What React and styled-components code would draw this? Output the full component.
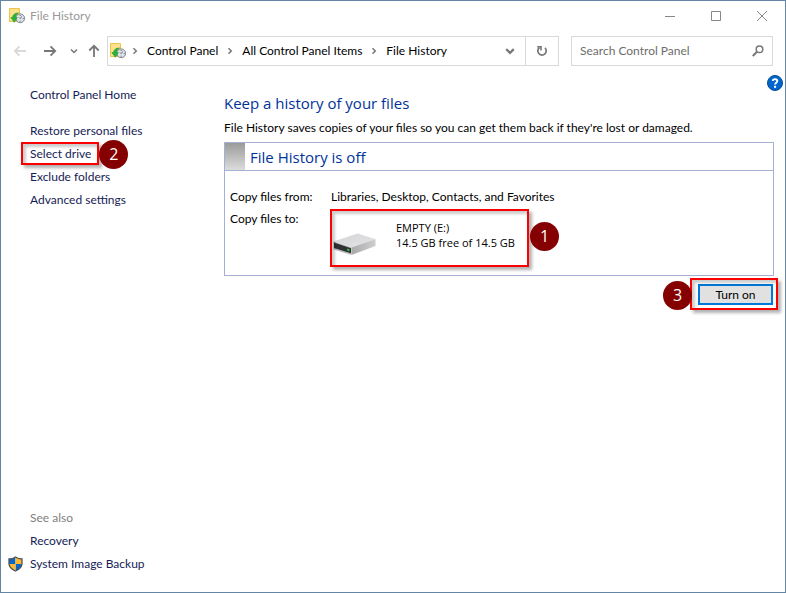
import React from "react";
import styled, { createGlobalStyle, css } from "styled-components";

const GlobalStyle = createGlobalStyle`
  *, *::before, *::after { box-sizing: border-box; }
  body { margin: 0; background: #fff; }
  body, button, input { font: 12px/16px Lato, "Open Sans", sans-serif; }
  h1, h2, p, ul, dl, dd { margin: 0; padding: 0; }
  ul { list-style: none; }
  svg { display: block; flex: none; }
`;

const Window = styled.div`
  display: flex;
  flex-direction: column;
  min-height: 100vh;
  border: 1px solid #6585a5;
  background: #fff;
  color: #000;
`;

const TitleBar = styled.header`
  display: flex;
  align-items: center;
  height: 30px;
  padding-left: 8px;
  gap: 5px;
  color: #999;
`;

const Title = styled.span`
  flex: 1;
`;

const CaptionButtons = styled.div`
  display: flex;
`;

const CaptionButton = styled.button`
  display: flex;
  align-items: center;
  justify-content: center;
  width: 46px;
  height: 30px;
  padding: 0;
  border: 0;
  background: none;
  color: #888;
`;

const Toolbar = styled.div`
  display: flex;
  align-items: center;
  padding: 5px 12px 0;
`;

const IconButton = styled.button`
  display: flex;
  align-items: center;
  justify-content: center;
  width: ${(p) => p.$width}px;
  height: 28px;
  padding: 0;
  border: 0;
  background: none;
  color: ${(p) => p.$tone || "#777"};
`;

const HistoryButtons = styled.div`
  display: grid;
  grid-template-columns: 30px 27px 17px 20px;
  flex: none;
`;

const AddressBar = styled.nav`
  display: flex;
  align-items: center;
  flex: 1;
  min-width: 0;
  height: 30px;
  padding-left: 2px;
  border: 1px solid #d9d9d9;
`;

const Crumbs = styled.ul`
  display: flex;
  align-items: center;
  flex: 1;
  gap: 3px;
  white-space: nowrap;
`;

const Crumb = styled.li`
  display: flex;
  align-items: center;

  svg { margin: 0 8px 0 5px; }
`;

const CrumbLink = styled.a`
  color: #000;
  text-decoration: none;
`;

const RefreshCell = styled.div`
  border-left: 1px solid #d9d9d9;
`;

const SearchBox = styled.label`
  display: flex;
  align-items: center;
  width: 202px;
  height: 30px;
  margin-left: 12px;
  padding: 0 8px;
  border: 1px solid #d9d9d9;
  color: #777;
`;

const SearchInput = styled.input`
  flex: 1;
  min-width: 0;
  padding: 0;
  border: 0;
  outline: 0;
  background: none;

  &::placeholder { color: #6d6d6d; opacity: 1; }
`;

const Body = styled.div`
  display: grid;
  grid-template-columns: 223px 1fr;
  flex: 1;
`;

const Sidebar = styled.aside`
  display: flex;
  flex-direction: column;
  justify-content: space-between;
  padding: 17px 0 17px 29px;
`;

const LinkList = styled.ul`
  display: flex;
  flex-direction: column;
  align-items: flex-start;
`;

const LinkRow = styled.li`
  display: flex;
  align-items: center;
  height: 23px;
  margin-bottom: ${(p) => (p.$spaced ? 13 : 0)}px;
  color: #808080;
`;

const TaskLink = styled.a`
  color: #151c55;
  text-decoration: none;
  white-space: nowrap;
`;

const ShieldSlot = styled.span`
  margin: 0 7px 0 -22px;
`;

const Main = styled.main`
  display: flex;
  flex-direction: column;
  padding: 9px 11px 0 0;
`;

const HelpButton = styled.button`
  align-self: flex-end;
  width: 16px;
  height: 16px;
  margin-right: -9px;
  padding: 0;
  border: 0;
  background: none;
`;

const Heading = styled.h1`
  color: #003399;
  font: 400 15px/24px "Open Sans", sans-serif;
`;

const Intro = styled.p`
  margin: 5px 0 6px;
`;

const Panel = styled.section`
  border: 1px solid #a6b0d4;
`;

const PanelHeader = styled.div`
  display: flex;
  align-items: stretch;
  height: 28px;
  gap: 5px;
  border-bottom: 1px solid #a6b0d4;
`;

const StatusSwatch = styled.span`
  width: 20px;
  background: linear-gradient(#9b9b9b, #dcdcdc);
`;

const PanelTitle = styled.h2`
  color: #003399;
  font: 400 15px/28px "Open Sans", sans-serif;
`;

const Details = styled.dl`
  display: grid;
  grid-template-columns: 101px 1fr;
  row-gap: 6px;
  padding: 18px 5px 14px;
`;

const callout = css`
  position: relative;

  &::after {
    content: "";
    position: absolute;
    inset: ${(p) => p.$inset};
    border: 2px solid #fa0000;
    box-shadow: 3px 3px 3px rgba(0, 0, 0, 0.3), inset 3px 3px 3px rgba(0, 0, 0, 0.2);
    pointer-events: none;
  }
`;

const Callout = styled.div`
  ${callout}
  width: fit-content;
`;

const StepBadge = styled.span`
  position: absolute;
  top: 50%;
  ${(p) => (p.$side === "left" ? "right" : "left")}: calc(100% + ${(p) => p.$gap}px);
  z-index: 1;
  width: 29px;
  height: 29px;
  margin-top: -14px;
  border-radius: 50%;
  background: #850000;
  color: #fff;
  font: 16px/29px "Open Sans", sans-serif;
  text-align: center;
`;

const Drive = styled.div`
  display: flex;
  align-items: flex-start;
  width: 198px;
  height: 50px;
  gap: 20px;
  padding: 9px 0 0 2px;
  font: 11px/15px "Open Sans", sans-serif;
  white-space: nowrap;
`;

const DriveArt = styled.span`
  padding-top: 13px;
`;

const Actions = styled.div`
  display: flex;
  justify-content: flex-end;
  padding: 8px 1px 0 0;
`;

const PrimaryButton = styled.button`
  display: block;
  width: 75px;
  height: 21px;
  padding: 0;
  border: 2px solid #0078d7;
  background: #e1e1e1;
  color: #000;
`;

function HistoryIcon() {
  return (
    <svg width="16" height="16" viewBox="0 0 16 16" aria-hidden="true">
      <path d="M.5.5h10v13H.5z" fill="#fce08c" stroke="#eac44c" />
      <circle cx="11.200" cy="10.300" r="4.400" fill="#dde3e8" stroke="#7d858c" />
      <path d="m10.800 10.700 2.200-2.200M11.200 7v1M11.200 12.800v1M13.700 10.500h1M10 9.500l1 1" fill="none" stroke="#59636b" strokeWidth=".9" />
      <path d="M9.500 5C6 4.800 3.700 6.800 3.500 9.500H1.800l3.500 4.800 3-4.800H6.500C6.600 7.500 7.500 6.200 9.500 5z" fill="#25b53a" stroke="#178c2b" strokeWidth=".5" />
    </svg>
  );
}

function Arrow({ direction }) {
  const turn = { left: 180, right: 0, up: -90 }[direction];
  return (
    <svg width="14" height="14" viewBox="0 0 14 14" aria-hidden="true">
      <path d="M1 7h11M7.500 2.300 12.200 7l-4.700 4.700" transform={`rotate(${turn} 7 7)`} fill="none" stroke="currentColor" strokeWidth="1.800" />
    </svg>
  );
}

function Chevron({ down, size = 8, weight = 1.5 }) {
  return (
    <svg width={size} height={size} viewBox="0 0 8 8" aria-hidden="true">
      <path d={down ? "M1 2.500 4 5.500 7 2.500" : "M2.500 1.200 5.300 4 2.500 6.800"} fill="none" stroke="#777" strokeWidth={weight} />
    </svg>
  );
}

function CaptionIcon({ d }) {
  return (
    <svg width="10" height="10" viewBox="0 0 10 10" aria-hidden="true">
      <path d={d} fill="none" stroke="currentColor" />
    </svg>
  );
}

function RefreshIcon() {
  return (
    <svg width="12" height="12" viewBox="0 0 12 12" aria-hidden="true">
      <path d="M9 2.900A4.200 4.200 0 1 1 3.500 2.500" fill="none" stroke="currentColor" strokeWidth="1.700" />
      <path d="M1.200 1.700H5v3.800" fill="none" stroke="currentColor" strokeWidth="1.600" />
    </svg>
  );
}

function SearchIcon() {
  return (
    <svg width="12" height="12" viewBox="0 0 12 12" aria-hidden="true">
      <circle cx="7.500" cy="4.300" r="3.300" fill="none" stroke="currentColor" strokeWidth="1.500" />
      <path d="M5 6.800.8 11" stroke="currentColor" strokeWidth="2" />
    </svg>
  );
}

function HelpIcon() {
  return (
    <svg width="16" height="16" viewBox="0 0 16 16" aria-hidden="true">
      <circle cx="8" cy="8" r="7.500" fill="#0066cc" stroke="#084a94" />
      <path d="M5.800 6C5.800 3.600 10.300 3.500 10.300 6c0 1.700-2.200 1.800-2.200 3.600" fill="none" stroke="#fff" strokeWidth="1.900" />
      <path d="M7 10.800h2.100v2H7z" fill="#fff" />
    </svg>
  );
}

const shieldOutline = "M7.500 1C5.500 2.500 3.500 3 1 3v4.500c0 3.500 3 6 6.500 7.500 3.500-1.500 6.500-4 6.500-7.500V3c-2.500 0-4.500-.5-6.500-2z";

function ShieldIcon() {
  return (
    <svg width="15" height="16" viewBox="0 0 15 16" aria-hidden="true">
      <clipPath id="shield">
        <path d={shieldOutline} />
      </clipPath>
      <g clipPath="url(#shield)">
        <path d="M0 0h7.500v8H0zM7.500 8H15v8H7.500z" fill="#0867c7" />
        <path d="M7.500 0H15v8H7.500zM0 8h7.500v8H0z" fill="#fdb82e" />
      </g>
      <path d={shieldOutline} fill="none" stroke="#4d5359" strokeWidth="1.300" />
    </svg>
  );
}

function DriveIcon() {
  return (
    <svg width="43" height="23" viewBox="0 0 43 23" aria-hidden="true">
      <defs>
        <linearGradient id="driveTop" x2="1" y2="1">
          <stop stopColor="#d3d3d5" />
          <stop offset="1" stopColor="#e5e5e7" />
        </linearGradient>
        <linearGradient id="driveSide" x2="1">
          <stop stopColor="#a9a9ab" />
          <stop offset="1" stopColor="#cecece" />
        </linearGradient>
      </defs>
      <path d="m.5 8.500 24-8 18 5.500-24 8.500z" fill="url(#driveTop)" />
      <path d="m18.500 14.500 24-8.500v7L18.500 22z" fill="url(#driveSide)" />
      <path d="m.5 8.500 18 6V22l-18-5.500z" fill="#b8b8ba" />
      <path d="m1 9.500 17 5.800v4.900L1 15z" fill="#303033" />
      <path d="m14.300 15.500 2 .7v2l-2-.6z" fill="#25e03a" />
    </svg>
  );
}

const crumbs = ["Control Panel", "All Control Panel Items", "File History"];

export default function App() {
  return (
    <>
      <GlobalStyle />
      <Window>
        <TitleBar>
          <HistoryIcon />
          <Title>File History</Title>
          <CaptionButtons>
            <CaptionButton aria-label="Minimize"><CaptionIcon d="M0 5.500h10" /></CaptionButton>
            <CaptionButton aria-label="Maximize"><CaptionIcon d="M.5.5h9v9h-9z" /></CaptionButton>
            <CaptionButton aria-label="Close"><CaptionIcon d="m0 0 10 10M10 0 0 10" /></CaptionButton>
          </CaptionButtons>
        </TitleBar>

        <Toolbar>
          <HistoryButtons>
            <IconButton $width={14} $tone="#d9d9d9" aria-label="Back"><Arrow direction="left" /></IconButton>
            <IconButton $width={14} aria-label="Forward"><Arrow direction="right" /></IconButton>
            <IconButton $width={8} aria-label="Recent locations"><Chevron down /></IconButton>
            <IconButton $width={14} aria-label="Up"><Arrow direction="up" /></IconButton>
          </HistoryButtons>
          <AddressBar aria-label="Address">
            <HistoryIcon />
            <Crumbs>
              {crumbs.map((name) => (
                <Crumb key={name}>
                  <Chevron />
                  <CrumbLink href="#">{name}</CrumbLink>
                </Crumb>
              ))}
            </Crumbs>
            <IconButton $width={30} aria-label="Previous locations"><Chevron down size={10} weight={1.7} /></IconButton>
            <RefreshCell>
              <IconButton $width={32} aria-label="Refresh"><RefreshIcon /></IconButton>
            </RefreshCell>
          </AddressBar>
          <SearchBox>
            <SearchInput type="text" placeholder="Search Control Panel" aria-label="Search Control Panel" />
            <SearchIcon />
          </SearchBox>
        </Toolbar>

        <Body>
          <Sidebar>
            <LinkList>
              <LinkRow $spaced><TaskLink href="#">Control Panel Home</TaskLink></LinkRow>
              <LinkRow><TaskLink href="#">Restore personal files</TaskLink></LinkRow>
              <LinkRow>
                <Callout $inset="-4px -8px -3px -9px">
                  <TaskLink href="#">Select drive</TaskLink>
                  <StepBadge $gap={8}>2</StepBadge>
                </Callout>
              </LinkRow>
              <LinkRow><TaskLink href="#">Exclude folders</TaskLink></LinkRow>
              <LinkRow><TaskLink href="#">Advanced settings</TaskLink></LinkRow>
            </LinkList>
            <LinkList>
              <LinkRow>See also</LinkRow>
              <LinkRow><TaskLink href="#">Recovery</TaskLink></LinkRow>
              <LinkRow>
                <ShieldSlot><ShieldIcon /></ShieldSlot>
                <TaskLink href="#">System Image Backup</TaskLink>
              </LinkRow>
            </LinkList>
          </Sidebar>

          <Main>
            <HelpButton aria-label="Help"><HelpIcon /></HelpButton>
            <Heading>Keep a history of your files</Heading>
            <Intro>File History saves copies of your files so you can get them back if they're lost or damaged.</Intro>
            <Panel>
              <PanelHeader>
                <StatusSwatch />
                <PanelTitle>File History is off</PanelTitle>
              </PanelHeader>
              <Details>
                <dt>Copy files from:</dt>
                <dd>Libraries, Desktop, Contacts, and Favorites</dd>
                <dt>Copy files to:</dt>
                <dd>
                  <Callout $inset="-2px 0 -6px -1px">
                    <Drive>
                      <DriveArt><DriveIcon /></DriveArt>
                      <div>
                        <div>EMPTY (E:)</div>
                        <div>14.5 GB free of 14.5 GB</div>
                      </div>
                    </Drive>
                    <StepBadge $gap={1}>1</StepBadge>
                  </Callout>
                </dd>
              </Details>
            </Panel>
            <Actions>
              <Callout $inset="-6px -5px -5px -8px">
                <PrimaryButton type="button">Turn on</PrimaryButton>
                <StepBadge $side="left" $gap={6}>3</StepBadge>
              </Callout>
            </Actions>
          </Main>
        </Body>
      </Window>
    </>
  );
}
